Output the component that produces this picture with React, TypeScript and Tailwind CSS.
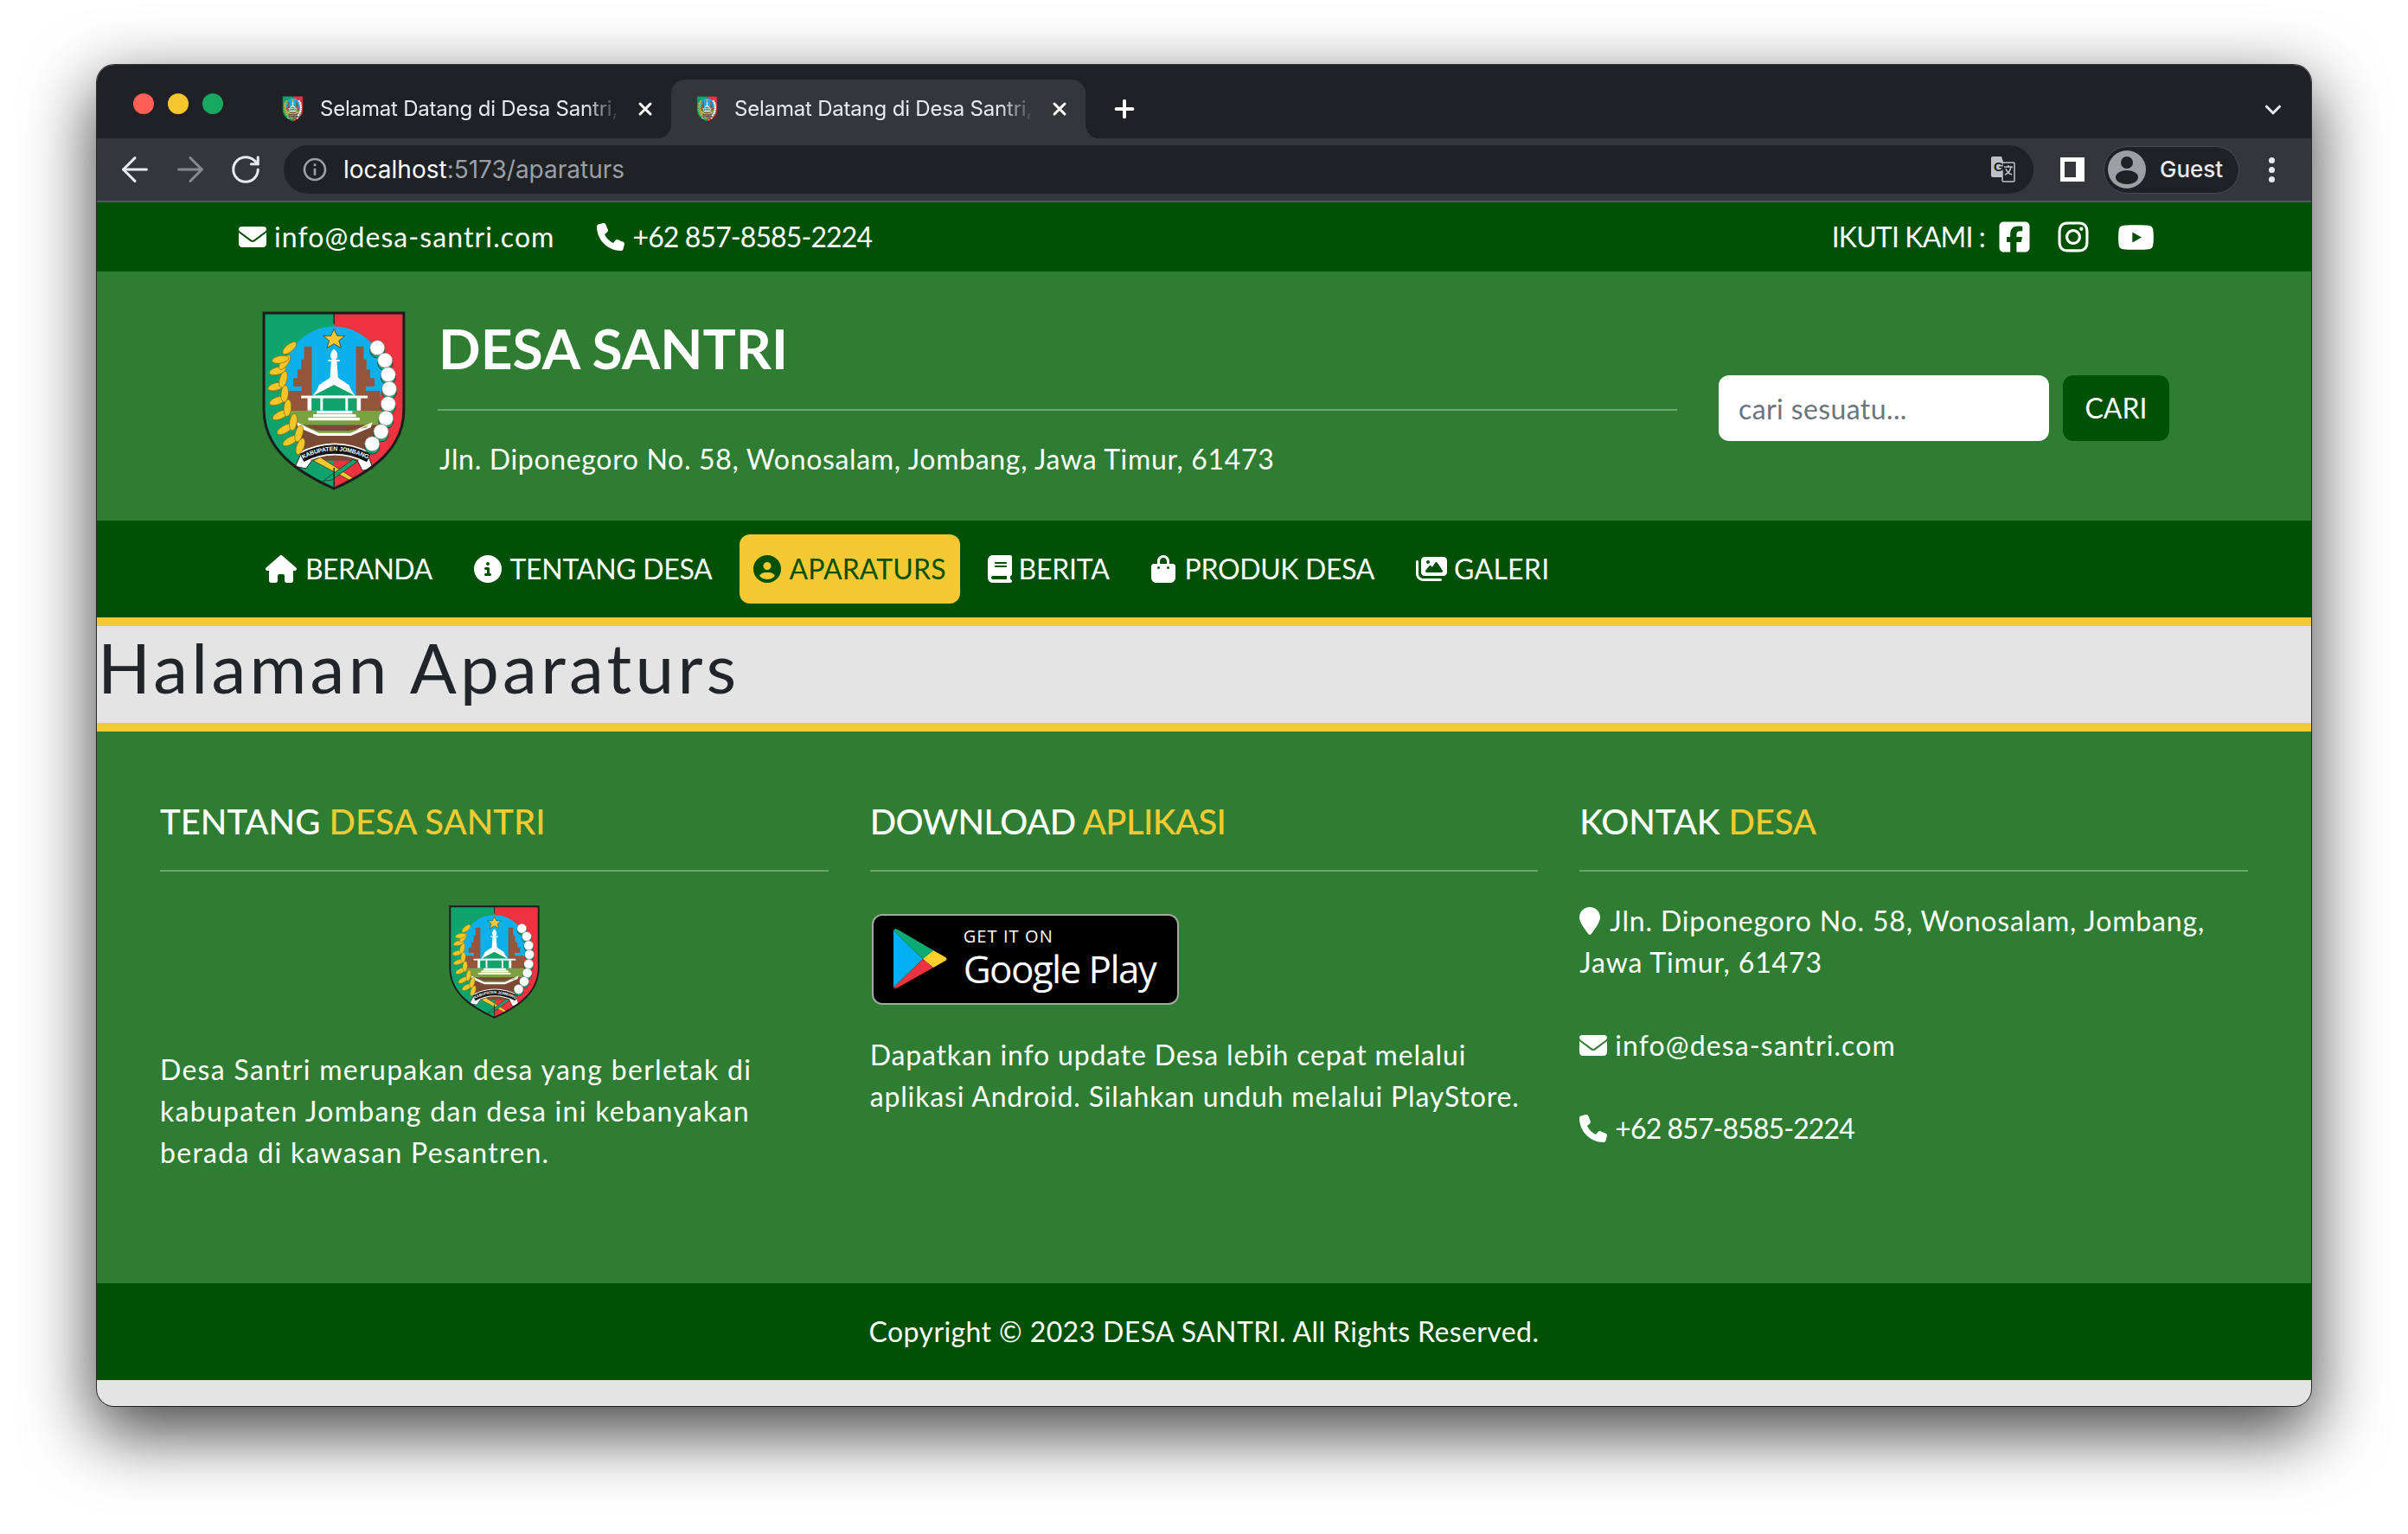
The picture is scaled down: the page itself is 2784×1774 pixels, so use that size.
import { ArrowLeft, ArrowRight, ChevronDown, Plus, RotateCw, X } from "lucide-react";
import { MdInfoOutline } from "react-icons/md";
import {
  FaBagShopping,
  FaBook,
  FaCircleInfo,
  FaCircleUser,
  FaEnvelope,
  FaHouse,
  FaImages,
  FaInstagram,
  FaLocationPin,
  FaPhone,
  FaSquareFacebook,
  FaYoutube,
} from "react-icons/fa6";

const NAV_ITEMS = [
  { label: "BERANDA", icon: <FaHouse size={36} />, text: "ml-[10px] tracking-[-0.6px]", active: false },
  { label: "TENTANG DESA", icon: <FaCircleInfo size={32} />, text: "ml-[10px] tracking-[-0.3px]", active: false },
  { label: "APARATURS", icon: <FaCircleUser size={32} />, text: "ml-[9px] tracking-[0.1px]", active: true },
  { label: "BERITA", icon: <FaBook className="h-[32px] w-[28px]" />, text: "ml-[8px] tracking-[-0.25px]", active: false },
  { label: "PRODUK DESA", icon: <FaBagShopping className="h-[32px] w-[28px]" />, text: "ml-[11px] tracking-[-0.35px]", active: false },
  { label: "GALERI", icon: <FaImages size={36} />, text: "ml-[8px] tracking-[0.25px]", active: false },
];

const COTTON = [
  [400, 128], [427, 172], [438, 222], [442, 272], [438, 325], [430, 375], [413, 422], [382, 465],
];

const LEAVES = [
  [130, 470, -70], [95, 450, -30], [125, 425, -75], [75, 410, -30], [105, 385, -80], [60, 360, -25],
  [85, 335, -85], [50, 310, -20], [75, 285, -85], [45, 260, -15], [70, 235, -75], [50, 205, -15],
  [75, 175, -55], [60, 165, -10], [92, 125, -40],
];

function Emblem({ className }: { className: string }) {
  return (
    <svg viewBox="-4 -4 503 628" className={className}>
      <path d="M248 0H495V340C495 480 380 560 248 620Z" fill="#ee3340" />
      <path d="M248 0H0V340C0 480 115 560 248 620Z" fill="#10a36b" />
      <circle cx="248" cy="225" r="176" fill="#0db0ea" />
      <path d="M143 120H170V345H85V275H135V260H105V230H120V200H133V165H143Z" fill="#94553b" />
      <path d="M352 120H325V345H410V275H360V260H390V230H375V200H362V165H352Z" fill="#94553b" />
      <path d="M248 58l11 24h27l-21 17 8 26-25-15-25 15 8-26-21-17h27z" fill="#f5c92f" stroke="#222" strokeWidth="2" />
      <path d="M248 128C262 138 264 158 254 166H268V172H258L262 228C270 238 285 240 292 250L300 254 308 272 322 292H174L188 272 196 254 204 250C211 240 226 238 234 228L238 172H228V166H242C232 158 234 138 248 128Z" fill="#fff" />
      <path d="M175 292l73-38 73 38z" fill="#10a36b" />
      <rect x="169" y="300" width="159" height="44" fill="#10a36b" />
      <rect x="133" y="292" width="233" height="9" fill="#fff" />
      <rect x="155" y="300" width="14" height="44" fill="#fff" />
      <rect x="200" y="300" width="9" height="44" fill="#fff" />
      <rect x="288" y="300" width="9" height="44" fill="#fff" />
      <rect x="328" y="300" width="14" height="44" fill="#fff" />
      <rect x="95" y="345" width="320" height="50" fill="#7aa33f" />
      <rect x="188" y="345" width="124" height="10" fill="#fff" />
      <rect x="175" y="357" width="150" height="10" fill="#fff" />
      <rect x="158" y="369" width="180" height="10" fill="#fff" />
      <path d="M115 395H400L385 470 325 520H170L120 470Z" fill="#7a4a35" />
      <path d="M118 385l75 36h110l80-36-6 18-70 30H192l-70-30z" fill="#fff" />
      <path d="M135 395l60 28h110l65-28-10 10-60 10H190z" fill="#7aa33f" />
      <path d="M175 520l130 70 15-6-120-76z" fill="#f5c92f" stroke="#222" strokeWidth="2" />
      <path d="M315 515l-90 65-15 12 30-4 90-65z" fill="#10a36b" stroke="#222" strokeWidth="2" />
      <path d="M112 540L135 490 170 520 150 548ZM385 548L365 495 330 520 348 555Z" fill="#fff" stroke="#222" strokeWidth="3" />
      <path d="M135 510Q248 450 370 510" fill="none" stroke="#fff" strokeWidth="42" />
      <path id="ribbon" d="M135 510Q248 450 370 510" fill="none" stroke="#111" strokeWidth="32" />
      <text fill="#fff" fontSize="21" fontWeight="700" fontFamily="Liberation Sans, sans-serif" textAnchor="middle">
        <textPath href="#ribbon" startOffset="50%" dominantBaseline="middle">KABUPATEN JOMBANG</textPath>
      </text>
      {LEAVES.map(([x, y, r], i) => (
        <ellipse key={i} cx={x} cy={y} rx="30" ry="13" transform={`rotate(${r} ${x} ${y})`} fill="#f4c628" stroke="#8a6a10" strokeWidth="2" />
      ))}
      {COTTON.map(([x, y], i) => (
        <g key={i}>
          <circle cx={x} cy={y + 6} r="26" fill="#10a36b" stroke="#222" strokeWidth="2" />
          <circle cx={x} cy={y - 4} r="26" fill="#fff" stroke="#777" strokeWidth="2" />
        </g>
      ))}
      <path d="M2 2H493V340C493 480 380 558 248 618C115 558 2 480 2 340Z" fill="none" stroke="#1c1c1c" strokeWidth="9" />
      <path d="M248 0V40M248 545V620" stroke="#1c1c1c" strokeWidth="4" />
    </svg>
  );
}

function BrowserTab({ active }: { active: boolean }) {
  return (
    <div className={`relative flex h-[68px] w-[479px] items-center rounded-t-[16px] pl-[29px] ${active ? "bg-[#35363a]" : ""}`}>
      {active && (
        <>
          <span className="absolute bottom-0 left-[-16px] h-4 w-4 bg-[radial-gradient(circle_at_0_0,#202124_16px,#35363a_16px)]" />
          <span className="absolute bottom-0 right-[-16px] h-4 w-4 bg-[radial-gradient(circle_at_100%_0,#202124_16px,#35363a_16px)]" />
        </>
      )}
      <Emblem className="h-[30px] w-[25px] shrink-0" />
      <span className="ml-[19px] w-[348px] whitespace-nowrap text-[24px] tracking-[-0.2px] text-[#e8eaed] [mask-image:linear-gradient(to_right,#000_88%,transparent)]">
        Selamat Datang di Desa Santri,
      </span>
      <X size={24} strokeWidth={3} className="ml-[16px] text-white" />
    </div>
  );
}

function ChromeBar() {
  return (
    <div className="font-['Inter',sans-serif]">
      <div className="flex h-[85px] items-end bg-[#202124]">
        <div className="flex h-full items-center gap-4 self-start pl-[42px] pt-[4px]">
          <span className="h-6 w-6 rounded-full bg-[#ff5f57]" />
          <span className="h-6 w-6 rounded-full bg-[#f6c62f]" />
          <span className="h-6 w-6 rounded-full bg-[#19a861]" />
        </div>
        <div className="ml-[39px] flex">
          <BrowserTab active={false} />
          <BrowserTab active />
        </div>
        <Plus size={32} strokeWidth={3} className="mb-[18px] ml-[29px] text-white" />
        <ChevronDown size={30} strokeWidth={2.5} className="mb-[18px] ml-auto mr-[29px] text-[#e8eaed]" />
      </div>
      <div className="flex h-[72px] items-center bg-[#35363a] pl-[21px]">
        <ArrowLeft size={46} strokeWidth={1.6} className="shrink-0 text-[#e8eaed]" />
        <ArrowRight size={46} strokeWidth={1.6} className="ml-[18px] shrink-0 text-[#85888c]" />
        <RotateCw size={38} strokeWidth={1.9} className="ml-[22px] shrink-0 text-[#e8eaed]" />
        <div className="ml-[25px] flex h-[56px] w-[2023px] shrink-0 items-center rounded-full bg-[#202124] pl-[20px] pr-[21px]">
          <MdInfoOutline size={32} className="text-[#9aa0a6]" />
          <span className="ml-[17px] text-[28px] text-white">
            localhost<span className="text-[#9aa0a6]">:5173/aparaturs</span>
          </span>
          <svg viewBox="0 0 28 30" className="ml-auto h-[30px] w-[28px]">
            <path d="M0 2a2 2 0 012-2h10l8 24H2a2 2 0 01-2-2z" fill="#bdc1c6" />
            <rect x="13" y="7" width="14" height="22" rx="1" fill="#202124" stroke="#bdc1c6" strokeWidth="1.5" />
            <text x="3" y="17" fontSize="15" fontWeight="700" fill="#202124" fontFamily="Liberation Sans, sans-serif">G</text>
            <path d="M15 12h10M20 10v2M23 12c-1 5-4 8-7 9M17 14c1 3 4 6 7 7" stroke="#bdc1c6" strokeWidth="1.5" fill="none" />
          </svg>
        </div>
        <div className="ml-[31px] h-[28px] w-[28px] shrink-0 border-y-[5px] border-l-[5px] border-r-[10px] border-white" />
        <div className="ml-[22px] flex h-[55px] w-[157px] shrink-0 items-center rounded-full border border-[#4a4b4f] bg-[#202124] pl-[4px]">
          <svg viewBox="0 0 44 44" className="h-[44px] w-[44px]">
            <circle cx="22" cy="22" r="22" fill="#9aa0a6" />
            <circle cx="22" cy="14" r="7" fill="#202124" />
            <ellipse cx="22" cy="31" rx="13" ry="8" fill="#202124" />
          </svg>
          <span className="ml-[16px] text-[26px] font-medium leading-none text-[#e8eaed]">Guest</span>
        </div>
        <div className="ml-[34px] flex flex-col gap-[4px]">
          <span className="h-[7px] w-[7px] rounded-full bg-[#e8eaed]" />
          <span className="h-[7px] w-[7px] rounded-full bg-[#e8eaed]" />
          <span className="h-[7px] w-[7px] rounded-full bg-[#e8eaed]" />
        </div>
      </div>
      <div className="h-[2px] bg-[#55565a]" />
    </div>
  );
}

function GooglePlayBadge() {
  return (
    <div className="ml-[2px] flex h-[105px] w-[355px] rounded-[12px] border-2 border-[#a6a6a6] bg-black pl-[23px] pt-[13px] text-white">
      <svg viewBox="0 0 62 69" className="mt-[2px] h-[69px] w-[62px]">
        <path d="M0 2L34 35 0 68z" fill="#00b0f0" />
        <path d="M0 2c1-2 3-2 5-1L46 25 34 35z" fill="#0bab72" />
        <path d="M46 25l14 8c2 1 2 3 0 4l-14 8-12-10z" fill="#fdd02b" />
        <path d="M0 68c1 1 3 1 5 0L46 45 34 35z" fill="#ee3340" />
      </svg>
      <div className="ml-[19px] font-['Open_Sans',sans-serif]">
        <div className="text-[20px] font-medium leading-[22px] tracking-[1.1px]">GET IT ON</div>
        <div className="mt-[2px] text-[44px] font-medium leading-[48px] tracking-[-1.6px]">Google Play</div>
      </div>
    </div>
  );
}

function FooterHeading({ first, accent, spacing }: { first: string; accent: string; spacing: string }) {
  return (
    <h3 className={`border-b-2 border-white/30 pb-[32px] text-[40px] font-medium leading-[48px] text-white ${spacing}`}>
      {first} <span className="text-[#f4c932]">{accent}</span>
    </h3>
  );
}

export default function App() {
  return (
    <div className="h-[1774px] w-[2784px] overflow-hidden bg-white pl-[112px] pt-[75px] font-['Lato',sans-serif]">
      <div className="flex h-[1551px] w-[2560px] flex-col overflow-hidden rounded-[20px] bg-[#e4e4e4] shadow-[0_0_0_1px_rgba(0,0,0,0.75),0_28px_80px_4px_rgba(0,0,0,0.72)]">
        <ChromeBar />

        {/* Top bar */}
        <div className="flex h-[80px] items-center bg-[#005005] pl-[164px] pr-[181px] text-[32px] text-white">
          <FaEnvelope size={32} />
          <span className="ml-[9px] tracking-[1.1px]">info@desa-santri.com</span>
          <FaPhone size={32} className="ml-[48px]" />
          <span className="ml-[10px] tracking-[-0.9px]">+62 857-8585-2224</span>
          <span className="ml-auto tracking-[-0.85px]">IKUTI KAMI :</span>
          <FaSquareFacebook size={40} className="ml-[14px]" />
          <FaInstagram size={40} className="ml-[28px]" />
          <FaYoutube size={43} className="ml-[31px]" />
        </div>

        {/* Header */}
        <div className="flex h-[288px] bg-[#2e7d32] pl-[191px] text-white">
          <Emblem className="mt-[46px] h-[207px] w-[166px] shrink-0" />
          <div className="ml-[37px] w-[1433px]">
            <h1 className="ml-[1px] mt-[51px] text-[64px] font-bold leading-[76px]">DESA SANTRI</h1>
            <hr className="mt-[32px] border-t-2 border-white/30" />
            <p className="ml-[2px] mt-[32px] text-[32px] leading-[48px] tracking-[0.67px]">Jln. Diponegoro No. 58, Wonosalam, Jombang, Jawa Timur, 61473</p>
          </div>
          <div className="ml-[48px] mt-[120px] flex gap-4">
            <input
              readOnly
              placeholder="cari sesuatu..."
              className="h-[76px] w-[382px] rounded-[12px] bg-white pl-[23px] text-[32px] tracking-[0.4px] outline-none placeholder:text-[#6c757d]"
            />
            <button className="flex h-[76px] w-[123px] items-center justify-center rounded-[12px] bg-[#005005] text-[32px] text-white">CARI</button>
          </div>
        </div>

        {/* Nav */}
        <nav className="flex h-[112px] items-center gap-4 bg-[#005005] pl-[179px] text-[32px]">
          {NAV_ITEMS.map((item) => (
            <a key={item.label} className={`flex h-[80px] items-center rounded-[12px] px-4 ${item.active ? "bg-[#f4c932] text-[#005005]" : "text-white"}`}>
              {item.icon}
              <span className={item.text}>{item.label}</span>
            </a>
          ))}
        </nav>

        {/* Page title */}
        <div className="flex h-[132px] items-center border-y-[10px] border-[#f4c932] bg-[#e4e4e4] pb-[18px] pl-[1px]">
          <h2 className="text-[80px] leading-none tracking-[4.3px] text-[#212529]">Halaman Aparaturs</h2>
        </div>

        {/* Footer columns */}
        <div className="grid h-[638px] grid-cols-3 gap-[48px] bg-[#2e7d32] px-[73px] pt-[80px] text-[32px] leading-[48px] text-white">
          <div>
            <FooterHeading first="TENTANG" accent="DESA SANTRI" spacing="tracking-[0px]" />
            <Emblem className="mx-auto mt-[39px] h-[131px] w-[107px]" />
            <p className="mt-[35px] tracking-[1.3px]">Desa Santri merupakan desa yang berletak di kabupaten Jombang dan desa ini kebanyakan berada di kawasan Pesantren.</p>
          </div>
          <div>
            <FooterHeading first="DOWNLOAD" accent="APLIKASI" spacing="tracking-[-0.6px]" />
            <div className="mt-[49px]">
              <GooglePlayBadge />
            </div>
            <p className="mt-[34px] tracking-[0.85px]">Dapatkan info update Desa lebih cepat melalui aplikasi Android. Silahkan unduh melalui PlayStore.</p>
          </div>
          <div>
            <FooterHeading first="KONTAK" accent="DESA" spacing="tracking-[-0.1px]" />
            <p className="mt-[33px] tracking-[0.85px]">
              <FaLocationPin className="mr-[11px] inline h-[32px] w-[24px] align-[-4px]" />
              Jln. Diponegoro No. 58, Wonosalam, Jombang,
              <br />
              Jawa Timur, 61473
            </p>
            <p className="mt-[48px] tracking-[1.1px]">
              <FaEnvelope size={32} className="mr-[9px] inline align-[-4px]" />
              info@desa-santri.com
            </p>
            <p className="mt-[48px] tracking-[-0.9px]">
              <FaPhone size={32} className="mr-[9px] inline align-[-4px]" />
              +62 857-8585-2224
            </p>
          </div>
        </div>

        {/* Copyright */}
        <div className="flex h-[112px] items-center justify-center bg-[#005005] text-[32px] tracking-[0.4px] text-white">
          Copyright © 2023 DESA SANTRI. All Rights Reserved.
        </div>
      </div>
    </div>
  );
}
